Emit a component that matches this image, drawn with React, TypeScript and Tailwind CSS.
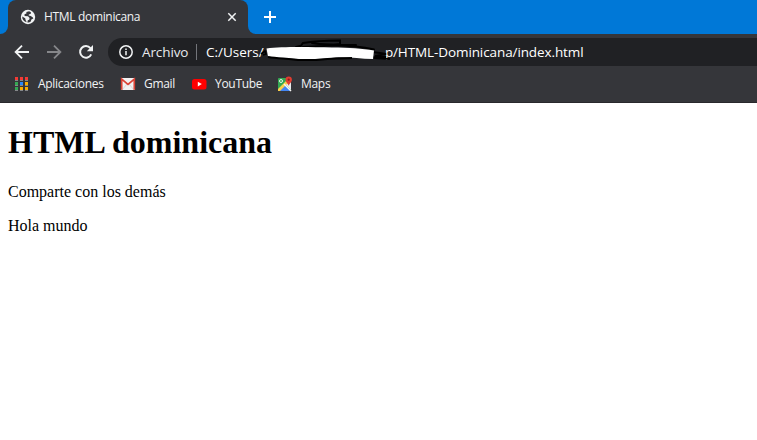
import type { ReactNode } from 'react';

const uiFont = "font-['Open_Sans','Noto_Sans',sans-serif]";

function GlobeIcon() {
  return (
    <svg width="16" height="16" viewBox="0 0 16 16" className="shrink-0">
      <circle cx="8" cy="8" r="7.2" fill="#f1f3f4" />
      <path
        d="M9.1 2.2 6.4 3.1 6.4 4.4 4.5 5.3 4.6 7.1 8 7.3 9.6 9.1 9.2 10.7 7.8 11.2 7.4 13.4C8.6 13.6 9.6 13.4 10.6 12.8L11.4 10.6 13.3 9.6 12.9 8.4 10.8 6.9 8.7 6.5 8.8 5.4 10.8 4.8 10.9 3.2Z"
        fill="#35363a"
      />
      <path d="M2.2 7.6 5.2 9.3 5.6 10.9 6.7 13.3C4 12.9 2.1 10.7 2.2 7.6Z" fill="#35363a" />
    </svg>
  );
}

function TabStrip() {
  return (
    <div className="flex h-[34px] bg-[#0078d7]">
      <div className="flex w-2 bg-[#35363a]">
        <div className="w-2 rounded-br-lg bg-[#0078d7]" />
      </div>
      <div className="flex w-60 items-center rounded-t-lg bg-[#35363a] pr-2 pl-3 text-[#f1f3f4]">
        <GlobeIcon />
        <span className="ml-2 flex-1 text-[12px] leading-4 tracking-[-0.33px] whitespace-nowrap">HTML dominicana</span>
        <svg width="16" height="16" viewBox="0 0 16 16" className="shrink-0">
          <path d="M4.3 4.3 11.7 11.7M11.7 4.3 4.3 11.7" stroke="#f1f3f4" strokeWidth="1.5" />
        </svg>
      </div>
      <div className="flex flex-1 bg-[#35363a]">
        <div className="flex flex-1 items-center rounded-bl-lg bg-[#0078d7] pl-[14px]">
          <svg width="16" height="16" viewBox="0 0 16 16">
            <path d="M8 2v12M2 8h12" stroke="#fff" strokeWidth="2" />
          </svg>
        </div>
      </div>
    </div>
  );
}

function Redaction() {
  return (
    <svg className="absolute top-0 left-[150px]" width="138" height="28" viewBox="0 0 138 28" fill="none">
      <path d="M3 16 7 13 8 16 5 17" stroke="#000" strokeWidth="1.6" />
      <path d="M114 14 122 15 128 16 117 18 128 19 116 20 132 21 113 19" stroke="#000" strokeWidth="2.2" />
      <path
        d="M38 9 42 8M42 9 45 5C56 3 67 2.5 82 2.5L82 6C70 8 57 9 45 9M54 5C64 7 74 6 86 7L98 7M56 8.5C75 7 96 7 116 11.5"
        stroke="#000"
        strokeWidth="2"
        strokeLinecap="round"
      />
      <path
        d="M8.5 10.5C24 8.5 50 9 74 9.5C91 9.5 104 10.5 116 12.5L115 21C101 21 90 18.5 78 19.5C57 22 36 21 22 20L10 18.5Z"
        fill="#fff"
      />
      <path d="M10 19C20 20.5 28 20.5 40 22L58 22C66 21 74 20 82 20.5L94 20" stroke="#000" strokeWidth="2" />
    </svg>
  );
}

function Toolbar() {
  return (
    <div className="flex h-9 items-center pl-3">
      <svg width="20" height="20" viewBox="0 0 20 20" fill="none" stroke="#f1f3f4" strokeWidth="1.8">
        <path d="M17 10H4M10 3.6 3.6 10 10 16.4" />
      </svg>
      <svg width="20" height="20" viewBox="0 0 20 20" fill="none" stroke="#86878a" strokeWidth="1.8" className="ml-3">
        <path d="M3 10h13M10 3.6 16.4 10 10 16.4" />
      </svg>
      <svg width="20" height="20" viewBox="0 0 20 20" fill="none" className="ml-3">
        <path d="M15.2 12.3A5.8 5.8 0 1 1 14.4 6.2" stroke="#f1f3f4" strokeWidth="2" />
        <path d="M17 3v6.2h-6.2Z" fill="#f1f3f4" />
      </svg>
      <div className="relative ml-3 flex h-7 flex-1 items-center rounded-l-full bg-[#202124] pl-[10px] leading-5 whitespace-nowrap">
        <svg width="16" height="16" viewBox="0 0 16 16" fill="none">
          <circle cx="8" cy="8" r="6.2" stroke="#f1f3f4" strokeWidth="1.5" />
          <path d="M8 7v4.3M8 4.4V6" stroke="#f1f3f4" strokeWidth="1.5" />
        </svg>
        <span className="ml-2 w-[54px] text-[13.5px] tracking-[-0.1px] text-[#e8eaed]">Archivo</span>
        <span className="h-4 w-px bg-[#73757a]" />
        <span className="ml-[9px] w-[179px] text-[13.5px] text-white">C:/Users/</span>
        <span className="w-[8px] text-[13.5px] text-white">p</span>
        <span className="text-[13.5px] tracking-[-0.1px] text-white">/HTML-Dominicana/index.html</span>
        <Redaction />
      </div>
    </div>
  );
}

function AppsIcon() {
  const colors = ['#f33b35', '#f33b35', '#f33b35', '#34a853', '#2687fc', '#f9ab00', '#34a853', '#f9ab00', '#f9ab00'];
  return (
    <svg width="16" height="16" viewBox="0 0 16 16" shapeRendering="crispEdges">
      {colors.map((c, i) => (
        <g key={i}>
          <rect x={1 + (i % 3) * 5} y={1 + Math.floor(i / 3) * 5} width="3" height="3" fill={c} />
          <rect x={1 + (i % 3) * 5} y={4 + Math.floor(i / 3) * 5} width="3" height="1" fill="#85878a" />
        </g>
      ))}
    </svg>
  );
}

function GmailIcon() {
  return (
    <svg width="16" height="16" viewBox="0 0 16 16">
      <rect x="1" y="2" width="14" height="12" rx="1" fill="#f2f2f2" />
      <path d="M2 14 7 8M14 14 9 8" stroke="#d8d8d8" />
      <path d="M1.7 13.7V3.2L8 8.5 14.3 3.2V13.7" stroke="#db4437" strokeWidth="1.7" fill="none" />
    </svg>
  );
}

function YouTubeIcon() {
  return (
    <svg width="16" height="16" viewBox="0 0 16 16">
      <rect x="1" y="3" width="14.5" height="10.5" rx="2.5" fill="#f00" />
      <path d="m6.8 5.8 4 2.3-4 2.3Z" fill="#fff" />
    </svg>
  );
}

function MapsIcon() {
  return (
    <svg width="16" height="16" viewBox="0 0 16 16">
      <rect x="1" y="2" width="13" height="13" rx="1" fill="#34a853" />
      <path d="m8 8 6 6V6Z" fill="#e8eaed" />
      <path d="m2 15 6-6 6 6Z" fill="#4285f4" />
      <path d="M1 13 12 2l2 2L3 15H1Z" fill="#fbd04b" />
      <path d="m7 8 7 7" stroke="#f5f5f5" strokeWidth="1.4" />
      <circle cx="4" cy="5" r="1.5" stroke="#e8f5e9" fill="none" />
      <path d="M11.7 10C11.4 7.5 8.5 6.5 8.5 3.7a3.2 3.2 0 0 1 6.4 0C14.9 6.5 12 7.5 11.7 10Z" fill="#e13d31" />
      <circle cx="11.7" cy="3.7" r="1.1" fill="#8c1d18" />
    </svg>
  );
}

function Bookmark({ icon, label, className }: { icon: ReactNode; label: string; className: string }) {
  return (
    <div className={`flex items-center gap-2 ${className}`}>
      {icon}
      <span className="text-[12px] leading-4 tracking-[-0.3px] whitespace-nowrap">{label}</span>
    </div>
  );
}

export default function App() {
  return (
    <div className="h-[440px] overflow-hidden bg-white">
      <header className={`${uiFont} bg-[#35363a]`}>
        <TabStrip />
        <Toolbar />
        <nav className="flex h-[33px] border-b border-[#29282c] pb-1 pl-[14px] text-[#f1f3f4]">
          <Bookmark icon={<AppsIcon />} label="Aplicaciones" className="w-[106px]" />
          <Bookmark icon={<GmailIcon />} label="Gmail" className="w-[71px]" />
          <Bookmark icon={<YouTubeIcon />} label="YouTube" className="w-[86px]" />
          <Bookmark icon={<MapsIcon />} label="Maps" className="w-[70px]" />
        </nav>
      </header>
      <main className="px-2 pt-[21px] font-['Liberation_Serif','Times_New_Roman',serif] text-black">
        <h1 className="text-[32px] leading-[37px] font-bold">HTML dominicana</h1>
        <p className="mt-[22px] text-[16px] leading-[18px]">Comparte con los demás</p>
        <p className="mt-4 text-[16px] leading-[18px]">Hola mundo</p>
      </main>
    </div>
  );
}
